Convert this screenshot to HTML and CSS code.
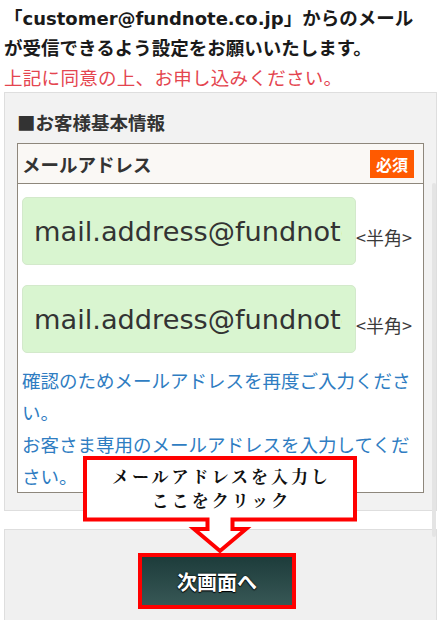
FILE: index.html
```html
<!DOCTYPE html>
<html lang="ja">
<head>
<meta charset="utf-8">
<title>お客様基本情報</title>
<link rel="stylesheet" href="styles.css">
</head>
<body>
<div class="page">
  <div class="notice">
    <p class="notice-strong">「<span class="latin">customer@fundnote.co.jp</span>」からのメール<br>が受信できるよう設定をお願いいたします。</p>
    <p class="notice-red">上記に同意の上、お申し込みください。</p>
  </div>

  <section class="panel">
    <h2 class="panel-title">■お客様基本情報</h2>
    <div class="field">
      <div class="field-head">
        <span class="field-label">メールアドレス</span>
        <span class="badge">必須</span>
      </div>
      <div class="field-body">
        <div class="input-row">
          <input class="text-input" type="text" value="mail.address@fundnote.co.jp" readonly>
          <span class="hint">&lt;半角&gt;</span>
        </div>
        <div class="input-row">
          <input class="text-input" type="text" value="mail.address@fundnote.co.jp" readonly>
          <span class="hint">&lt;半角&gt;</span>
        </div>
        <p class="note">確認のためメールアドレスを再度ご入力ください。</p>
        <p class="note">お客さま専用のメールアドレスを入力してください。</p>
      </div>
    </div>
  </section>

  <section class="panel panel-action">
    <button class="next-btn" type="button">次画面へ</button>
  </section>

  <div class="callout">
    <svg class="callout-shape" width="274" height="100" viewBox="0 0 274 100">
      <polygon points="2,2 272,2 272,63.5 149.5,63.5 149.5,73 163,73 137,95 111,73 124.5,73 124.5,63.5 2,63.5" fill="#ffffff" stroke="#ff0000" stroke-width="4" stroke-linejoin="miter"/>
    </svg>
    <div class="callout-text">メールアドレスを入力し<br>ここをクリック</div>
  </div>

  <div class="scroll-thumb"></div>
</div>
</body>
</html>
```

FILE: styles.css
```css
html, body {
  margin: 0;
  padding: 0;
  background: #ffffff;
}

body {
  font-family: "Noto Sans CJK JP", sans-serif;
  color: #1a1a1a;
}

.page {
  position: relative;
  width: 440px;
  height: 620px;
  overflow: hidden;
  box-sizing: border-box;
  padding: 0 3px 0 4px;
}

.notice {
  padding-top: 2px;
}

.notice p {
  margin: 0;
  font-size: 18.5px;
  line-height: 30px;
}

.notice-strong {
  font-weight: bold;
  color: #1a1a1a;
}

.latin {
  font-family: "DejaVu Sans", sans-serif;
  font-size: 18px;
  line-height: 1;
}

.notice-red {
  color: #e4454f;
  letter-spacing: 0.3px;
}

.panel {
  background: #f2f2f2;
  border: 1px solid #dedede;
  padding: 14px 12px 17px 12px;
}

.panel-title {
  margin: 0 0 6px 0;
  font-size: 18.5px;
  line-height: 30px;
  font-weight: bold;
  color: #333333;
}

.field {
  border: 1px solid #8e877c;
  background: #ffffff;
}

.field-head {
  display: flex;
  align-items: center;
  justify-content: space-between;
  height: 39px;
  padding: 0 9px 0 4px;
  background: #faf8f5;
  border-bottom: 1px solid #8e877c;
}

.field-label {
  font-size: 18.5px;
  font-weight: bold;
  color: #333333;
}

.badge {
  display: block;
  height: 28px;
  line-height: 28px;
  padding: 0 6px;
  background: #ff5a00;
  color: #ffffff;
  font-size: 16px;
  font-weight: bold;
}

.field-body {
  padding: 13px 0 0 4px;
}

.input-row {
  display: flex;
  align-items: center;
  margin-bottom: 20px;
}

.input-row + .input-row {
  margin-bottom: 11px;
}

.text-input {
  box-sizing: border-box;
  width: 334px;
  height: 68px;
  margin: 0;
  padding: 0 13px 0 11px;
  border: 1px solid #d3e9cb;
  border-radius: 5px;
  background: #d9f5d0;
  color: #333333;
  font-family: "DejaVu Sans", sans-serif;
  font-size: 27.2px;
  outline: none;
}

.hint {
  padding-top: 12px;
  font-size: 18px;
  color: #3a3a3a;
}

.note {
  margin: 0;
  font-size: 18.5px;
  line-height: 32px;
  color: #2f7dc2;
}

.panel-action {
  margin-top: 18px;
  background: #f0f0f0;
  padding: 23px 7px 30px 0;
  display: flex;
  justify-content: center;
}

.next-btn {
  box-sizing: border-box;
  width: 158px;
  height: 56px;
  margin: 0;
  padding: 0;
  border: 4px solid #ff0000;
  background: linear-gradient(#1d3c3b, #375755);
  color: #ffffff;
  font-family: "Noto Sans CJK JP", sans-serif;
  font-size: 20px;
  font-weight: bold;
  text-shadow: 0 0 2px #000000, 0 1px 1px #000000;
}

.callout {
  position: absolute;
  left: 83px;
  top: 456px;
  width: 274px;
  height: 100px;
}

.callout-shape {
  display: block;
  overflow: visible;
}

.callout-text {
  position: absolute;
  left: 0;
  top: 8px;
  width: 274px;
  padding-left: 3px;
  box-sizing: border-box;
  text-align: center;
  font-family: "Noto Serif CJK JP", "Noto Sans CJK JP", serif;
  font-size: 17px;
  line-height: 24px;
  letter-spacing: 3px;
  font-weight: bold;
  color: #111111;
}

.scroll-thumb {
  position: absolute;
  left: 432px;
  top: 183px;
  width: 4px;
  height: 354px;
  border-radius: 2px;
  background: #e4e4e4;
}
```
